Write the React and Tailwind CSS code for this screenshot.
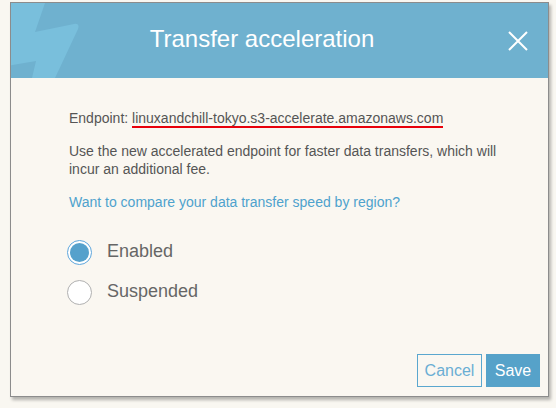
import React, { useState } from 'react';

const Radio = ({ checked, label, onClick }) => (
  <div className="flex items-center h-[25px] cursor-pointer" onClick={onClick}>
    {checked ? (
      <span className="w-[25px] h-[25px] rounded-full border border-[#5ea6dc] bg-white p-[2px] flex">
        <span className="flex-1 rounded-full bg-[#55a1cc]" />
      </span>
    ) : (
      <span className="w-[25px] h-[25px] rounded-full border border-[#b0b0b0] bg-white" />
    )}
    <span className="ml-[15px] pb-[3px] text-[18px] leading-[22px] text-[#666]">{label}</span>
  </div>
);

export default function App() {
  const [status, setStatus] = useState('enabled');

  return (
    <div
      className="w-[556px] h-[408px] bg-[#f9f7f1] pt-[2px] pl-[10px]"
      style={{ fontFamily: '"Liberation Sans", Arial, sans-serif' }}
    >
      <div className="w-[539px] h-[395px] border border-[#8c8c8c] bg-[#faf7f1] flex flex-col shadow-[2px_3px_3px_rgba(0,0,0,0.28)]">
        {/* Header */}
        <div className="relative h-[75px] bg-[#6fb1cf] overflow-hidden flex items-start">
          <svg className="absolute left-0 top-0" width="120" height="75" viewBox="0 0 120 75">
            <path
              d="M-5 0 L34 0 L24 29 L63 21 Q69 20 67 26 L44 75 L21 75 L25 58 L-5 63 Z"
              fill="#79bfdc"
            />
          </svg>
          <div className="relative flex-1 text-center pt-[22px] pr-[35px] text-white text-[24px] leading-[28px]">
            Transfer acceleration
          </div>
          <button className="absolute right-[20px] top-[28px] w-[20px] h-[20px]">
            <svg width="20" height="20" viewBox="0 0 20 20">
              <path d="M1 1 L19 19 M19 1 L1 19" stroke="#fff" strokeWidth="2" />
            </svg>
          </button>
        </div>

        {/* Body */}
        <div className="flex-1 flex flex-col pl-[58px] pt-[31px] text-[14px] leading-[18px] text-[#555]">
          <p>
            Endpoint:{' '}
            <span className="border-b-2 border-[#e8000b]">linuxandchill-tokyo.s3-accelerate.amazonaws.com</span>
          </p>
          <p className="mt-[15px] max-w-[445px]">
            Use the new accelerated endpoint for faster data transfers, which will incur an additional fee.
          </p>
          <a href="#" className="mt-[15px] text-[#4ea2cd]">
            Want to compare your data transfer speed by region?
          </a>

          <div className="mt-[29px] ml-[-2px] flex flex-col gap-[15px]">
            <Radio checked={status === 'enabled'} label="Enabled" onClick={() => setStatus('enabled')} />
            <Radio checked={status === 'suspended'} label="Suspended" onClick={() => setStatus('suspended')} />
          </div>

          <div className="mt-auto mb-[9px] mr-[8px] flex justify-end gap-[4px]">
            <button className="w-[65px] h-[33px] border border-[#5aa7cf] text-[#6aaed4] text-[16px]">
              Cancel
            </button>
            <button className="w-[54px] h-[33px] bg-[#56a2c9] text-white text-[16px]">
              Save
            </button>
          </div>
        </div>
      </div>
    </div>
  );
}
